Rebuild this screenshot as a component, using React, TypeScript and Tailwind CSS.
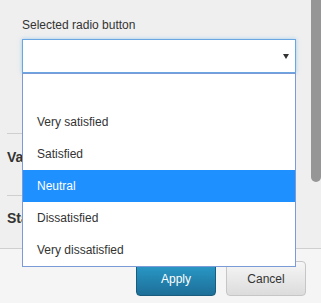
import React from "react";

const options = ["", "Very satisfied", "Satisfied", "Neutral", "Dissatisfied", "Very dissatisfied"];

export default function App() {
  return (
    <div className="w-[321px] h-[303px] overflow-hidden bg-[#efefef] flex flex-col text-[12px] text-[#333] font-['Liberation_Sans',Arial,sans-serif]">
      <div className="h-[249px] flex border-b border-[#cfcfcf]">
        <div className="flex-1 pl-[7px] pr-[15px] flex flex-col">
          <div className="pl-[15px] pt-[18px]">
            <div className="h-[14px] leading-[14px]">Selected radio button</div>
            <div className="relative mt-[7px]">
              <div className="h-[34px] bg-white border border-[#6aa6e2] shadow-[0_0_4px_rgba(102,175,233,0.55)] flex items-center justify-end pr-[6px]">
                <svg width="6" height="5" viewBox="0 0 6 5">
                  <polygon points="0,0 6,0 3,5" fill="#333" />
                </svg>
              </div>
              <ul className="absolute left-0 right-0 top-[34px] z-10 bg-white border border-[#7b9bd6]">
                {options.map((o, i) => (
                  <li
                    key={i}
                    className={
                      "h-[32px] pl-[14px] flex items-center leading-[14px] " +
                      (o === "Neutral" ? "bg-[#1e90ff] text-white" : "text-[#333]")
                    }
                  >
                    {o}
                  </li>
                ))}
              </ul>
            </div>
          </div>
          <div className="h-[60px]" />
          <div className="h-[62px] border-t border-[#cfcfcf] pt-[15px]">
            <div className="text-[14px] font-bold leading-[16px] text-[#333]">Value</div>
          </div>
          <div className="flex-1 border-t border-[#cfcfcf] pt-[14px]">
            <div className="text-[14px] font-bold leading-[16px] text-[#333]">Status</div>
          </div>
        </div>
        <div className="w-[10px]">
          <div className="h-[182px] bg-[#969696] rounded-b-[5px]" />
        </div>
      </div>
      <div className="flex-1 bg-[#f5f5f5] flex justify-end items-start gap-[10px] pt-[12px] pr-[15px]">
        <button className="w-[80px] h-[35px] rounded-[4px] border border-[#1a5c7d] bg-gradient-to-b from-[#2b9dcc] to-[#1d6f98] text-white text-[12px]">
          Apply
        </button>
        <button className="w-[80px] h-[35px] rounded-[4px] border border-[#c6c6c6] bg-gradient-to-b from-[#f6f6f6] to-[#dcdcdc] text-[#333] text-[12px]">
          Cancel
        </button>
      </div>
    </div>
  );
}
